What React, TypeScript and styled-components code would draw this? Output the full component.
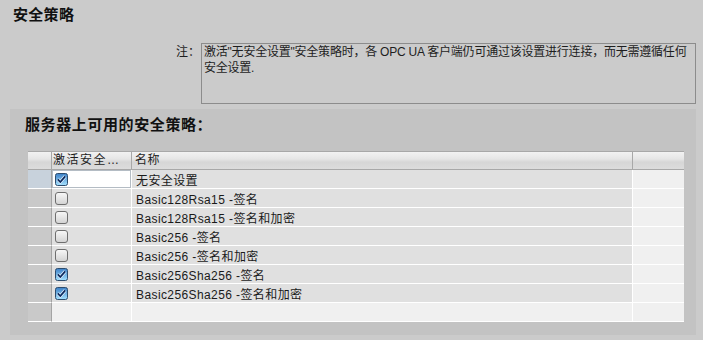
import styled, { createGlobalStyle } from 'styled-components';

const GlobalStyle = createGlobalStyle`
  body {
    margin: 0;
    background: #cbcbcb;
    font-family: "Liberation Sans", "Noto Sans CJK SC", sans-serif;
    color: #1e1e1e;
  }
`;

interface Policy {
  name: string;
  checked: boolean;
}

const policies: Policy[] = [
  { name: '无安全设置', checked: true },
  { name: 'Basic128Rsa15 -签名', checked: false },
  { name: 'Basic128Rsa15 -签名和加密', checked: false },
  { name: 'Basic256 -签名', checked: false },
  { name: 'Basic256 -签名和加密', checked: false },
  { name: 'Basic256Sha256 -签名', checked: true },
  { name: 'Basic256Sha256 -签名和加密', checked: true },
];

const CheckBox = ({ checked }: { checked: boolean }) => (
  <svg width="13" height="13" viewBox="0 0 13 13">
    <defs>
      <linearGradient id="cbOff" x1="0" y1="0" x2="0" y2="1">
        <stop offset="0" stopColor="#f8f8f8" />
        <stop offset="1" stopColor="#d2d2d2" />
      </linearGradient>
      <linearGradient id="cbOn" x1="0" y1="0" x2="0" y2="1">
        <stop offset="0" stopColor="#3b7fc6" />
        <stop offset="1" stopColor="#a6e2ff" />
      </linearGradient>
    </defs>
    {checked ? (
      <>
        <rect x="0.5" y="0.5" width="12" height="12" rx="2" fill="url(#cbOn)" stroke="#2d4d6e" />
        <path d="M2.8 6.4 L5.3 9 L10.2 3.4" fill="none" stroke="#e8f4ff" strokeWidth="3.2" />
        <path d="M2.8 6.4 L5.3 9 L10.2 3.4" fill="none" stroke="#0b2a5e" strokeWidth="1.8" />
      </>
    ) : (
      <rect x="0.5" y="0.5" width="12" height="12" rx="2.5" fill="url(#cbOff)" stroke="#6e6e6e" />
    )}
  </svg>
);

const App = () => {
  return (
    <Page>
      <GlobalStyle />
      <Title>安全策略</Title>

      <NoteRow>
        <NoteLabel>注：</NoteLabel>
        <NoteBox>
          <span>激活"无安全设置"安全策略时，各 OPC UA 客户端仍可通过该设置进行连接，而无需遵循任何</span>
          <span>安全设置.</span>
        </NoteBox>
      </NoteRow>

      <Panel>
        <PanelTitle>服务器上可用的安全策略：</PanelTitle>
        <Table>
          <HeadCell />
          <HeadCell $wide>激活安全设置</HeadCell>
          <HeadCell>名称</HeadCell>
          <HeadCell $last />

          {policies.map((p, i) => (
            <Row key={p.name}>
              <RowHead $selected={i === 0} />
              <CheckCell $editing={i === 0}>
                <CheckBox checked={p.checked} />
              </CheckCell>
              <NameCell>{p.name}</NameCell>
              <FillCell />
            </Row>
          ))}

          <Row>
            <RowHead />
            <CheckCell $empty />
            <NameCell $empty />
            <FillCell />
          </Row>
        </Table>
      </Panel>
    </Page>
  );
};

const Page = styled.div`
  width: 703px;
  height: 340px;
  overflow: hidden;
  padding-top: 4px;
  box-sizing: border-box;
`;

const Title = styled.div`
  padding-left: 13px;
  font-family: "Noto Sans CJK SC", sans-serif;
  font-size: 15px;
  font-weight: 700;
  line-height: 20px;
  letter-spacing: 0.3px;
  color: #111;
`;

const NoteRow = styled.div`
  display: flex;
  justify-content: flex-end;
  align-items: flex-start;
  margin: 19px 7px 0 0;
`;

const NoteLabel = styled.div`
  width: 25px;
  padding-top: 1px;
  font-size: 12px;
  line-height: 16px;
`;

const NoteBox = styled.div`
  display: flex;
  flex-direction: column;
  width: 495px;
  height: 61px;
  box-sizing: border-box;
  padding: 0 2px;
  border: 1px solid #8c8c8c;
  font-size: 12px;
  line-height: 16px;
  letter-spacing: -0.22px;
  white-space: nowrap;
  overflow: hidden;
`;

const Panel = styled.div`
  margin: 5px 7px 0 10px;
  padding: 5px 12px 13px 18px;
  background: #c3c3c3;
`;

const PanelTitle = styled.div`
  margin-left: -3px;
  font-family: "Noto Sans CJK SC", sans-serif;
  font-size: 15px;
  font-weight: 700;
  line-height: 20px;
  letter-spacing: 0.6px;
  color: #111;
`;

const Table = styled.div`
  display: grid;
  grid-template-columns: 24px 80px 501px 1fr;
  grid-auto-rows: 19px;
  margin-top: 17px;
  font-size: 12px;
`;

const HeadCell = styled.div<{ $wide?: boolean; $last?: boolean }>`
  box-sizing: border-box;
  border-top: 1px solid #a8a8a8;
  border-bottom: 1px solid #a8a8a8;
  border-right: ${p => (p.$last ? 'none' : '1px solid #a8a8a8')};
  background: linear-gradient(#f2f2f2, #e6e6e6 40%, #d6d6d6 60%, #dcdcdc);
  padding-left: ${p => (p.$wide ? '1px' : '3px')};
  line-height: 17px;
  letter-spacing: ${p => (p.$wide ? '1.5px' : '0.5px')};
  white-space: nowrap;
  overflow: hidden;
  text-overflow: ellipsis;
`;

const Row = styled.div`
  display: contents;
`;

const BodyCell = styled.div`
  box-sizing: border-box;
  border-bottom: 1px solid #ffffff;
  border-right: 1px solid #ffffff;
  display: flex;
  align-items: center;
`;

const RowHead = styled(BodyCell)<{ $selected?: boolean }>`
  background: ${p => (p.$selected ? '#c8d2dc' : '#c9c9c9')};
  border-right-color: #a4a4a4;
`;

const CheckCell = styled(BodyCell)<{ $editing?: boolean; $empty?: boolean }>`
  padding-left: 3px;
  background: ${p => (p.$editing ? '#ffffff' : p.$empty ? '#f0f0f0' : '#e0e0e0')};
  ${p => p.$editing && 'box-shadow: inset 0 0 0 1px #b4bcc4;'}
`;

const NameCell = styled(BodyCell)<{ $empty?: boolean }>`
  padding-left: 4px;
  background: ${p => (p.$empty ? '#f0f0f0' : '#e0e0e0')};
  white-space: nowrap;
  letter-spacing: 0.4px;
  color: #1a1a1a;
`;

const FillCell = styled(BodyCell)`
  border-right: none;
  background: #f0f0f0;
`;

export default App;
